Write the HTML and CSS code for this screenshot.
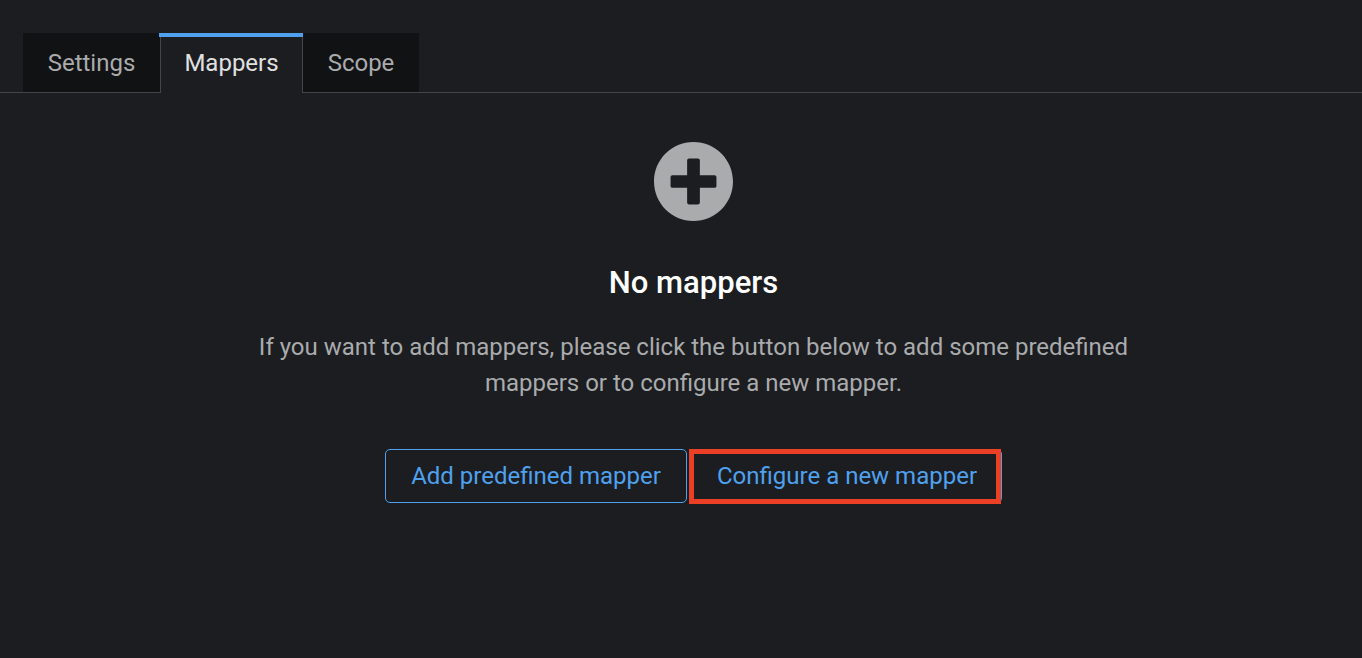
FILE: index.html
```html
<!DOCTYPE html>
<html lang="en">
<head>
<meta charset="utf-8">
<meta name="viewport" content="width=device-width, initial-scale=1">
<title>Mappers</title>
<link rel="stylesheet" href="styles.css">
</head>
<body>
<nav class="tabs" role="tablist">
  <button class="tab tab-settings" type="button" role="tab" aria-selected="false">Settings</button>
  <button class="tab tab-mappers tab-active" type="button" role="tab" aria-selected="true">Mappers</button>
  <button class="tab tab-scope" type="button" role="tab" aria-selected="false">Scope</button>
</nav>
<main class="empty-state" role="tabpanel">
  <svg class="empty-icon" viewBox="8 8 496 496" aria-hidden="true"><path fill="currentColor" d="M256 8C119 8 8 119 8 256s111 248 248 248 248-111 248-248S393 8 256 8zm144 276c0 6.6-5.4 12-12 12h-92v92c0 6.6-5.4 12-12 12h-56c-6.6 0-12-5.4-12-12v-92h-92c-6.6 0-12-5.4-12-12v-56c0-6.6 5.4-12 12-12h92v-92c0-6.6 5.4-12 12-12h56c6.6 0 12 5.4 12 12v92h92c6.6 0 12 5.4 12 12v56z"/></svg>
  <h1 class="empty-title">No mappers</h1>
  <p class="empty-text">If you want to add mappers, please click the button below to add some predefined mappers or to configure a new mapper.</p>
  <div class="actions">
    <button class="button button-predefined" type="button">Add predefined mapper</button>
    <span class="highlight"><button class="button button-configure" type="button">Configure a new mapper</button></span>
  </div>
</main>
</body>
</html>
```

FILE: styles.css
```css
* {
  box-sizing: border-box;
}

body {
  margin: 0;
  min-height: 100vh;
  background: #1b1d21;
  color: #aaabac;
  font-family: Roboto, "Liberation Sans", sans-serif;
  font-size: 24px;
  line-height: 36px;
}

button {
  font: inherit;
  cursor: pointer;
}

.tabs {
  display: flex;
  margin-top: 33px;
  padding-left: 23px;
  box-shadow: inset 0 -1px #444548;
}

.tab {
  height: 60px;
  padding: 0;
  border: 0;
  border-bottom: 1px solid #444548;
  background: #111214;
  color: #aaabac;
}

.tab-settings {
  min-width: 137px;
}

.tab-mappers {
  min-width: 143px;
}

.tab-scope {
  min-width: 116px;
}

.tab-active {
  position: relative;
  border: 1px solid #444548;
  border-width: 0 1px;
  background: #1b1d21;
  color: #e0e0e0;
}

.tab-active::before {
  content: "";
  position: absolute;
  inset: 0 -1px auto -2px;
  height: 4px;
  background: #4fa1ee;
}

.empty-state {
  display: flex;
  flex-direction: column;
  align-items: center;
  padding: 49px 0 48px 25px;
  text-align: center;
}

.empty-icon {
  width: 79px;
  height: 79px;
}

.empty-title {
  margin: 42px 0 0;
  color: #fff;
  font-size: 31px;
  font-weight: 500;
  line-height: 40px;
}

.empty-text {
  max-width: 900px;
  margin: 26px 0 0;
}

.actions {
  display: flex;
  gap: 5px;
  margin-top: 48px;
}

.button {
  height: 54px;
  padding: 0;
  border: 1px solid #4fa1ee;
  border-radius: 5px;
  background: transparent;
  color: #4fa1ee;
}

.button-predefined {
  min-width: 302px;
}

.button-configure {
  min-width: 310px;
}

.highlight {
  position: relative;
}

.highlight::after {
  content: "";
  position: absolute;
  inset: 0 1px -1px -3px;
  border: 5px solid #eb4026;
  pointer-events: none;
}
```
